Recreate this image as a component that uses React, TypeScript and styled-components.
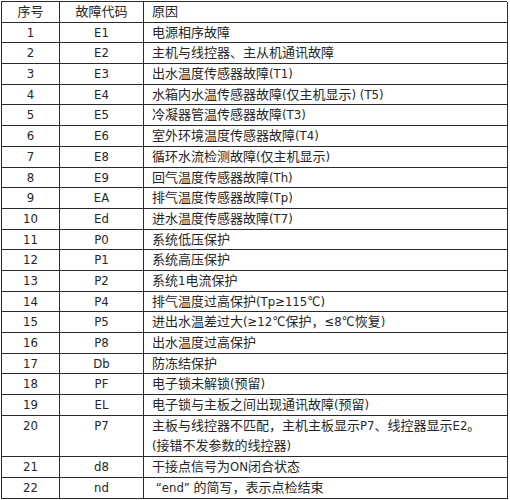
import React from "react";
import styled, { createGlobalStyle } from "styled-components";

const Global = createGlobalStyle`
  html, body { margin: 0; padding: 0; background: #ffffff; }
  body { padding: 1px 0 0 1px; }
`;

const ROW = 20.7;

const Table = styled.div`
  display: grid;
  grid-template-columns: 58px 84px 364px;
  grid-auto-rows: ${ROW}px;
  width: 506px;
  border-top: 1px solid #2a2a2a;
  border-left: 1px solid #2a2a2a;
  box-sizing: border-box;
  font-family: "Liberation Sans Narrow", "DejaVu Sans Condensed", "Noto Sans CJK SC", "Noto Sans", sans-serif;
  font-size: 13px;
  color: #262626;
`;

const Cell = styled.div<{ $align?: "center" | "left"; $span?: number }>`
  border-right: 1px solid #2a2a2a;
  border-bottom: 1px solid #2a2a2a;
  box-sizing: border-box;
  line-height: ${ROW - 1}px;
  padding: 0 ${(p) => (p.$align === "left" ? "8px" : "0")};
  text-align: ${(p) => p.$align ?? "center"};
  white-space: pre;
  overflow: hidden;
  grid-row: span ${(p) => p.$span ?? 1};
`;

const Line = styled.div`
  height: ${ROW}px;
  line-height: ${ROW - 1}px;
`;

type Row = { no: string; code: string; reason: string[] };

const rows: Row[] = [
  { no: "1", code: "E1", reason: ["电源相序故障"] },
  { no: "2", code: "E2", reason: ["主机与线控器、主从机通讯故障"] },
  { no: "3", code: "E3", reason: ["出水温度传感器故障(T1)"] },
  { no: "4", code: "E4", reason: ["水箱内水温传感器故障(仅主机显示) (T5)"] },
  { no: "5", code: "E5", reason: ["冷凝器管温传感器故障(T3)"] },
  { no: "6", code: "E6", reason: ["室外环境温度传感器故障(T4)"] },
  { no: "7", code: "E8", reason: ["循环水流检测故障(仅主机显示)"] },
  { no: "8", code: "E9", reason: ["回气温度传感器故障(Th)"] },
  { no: "9", code: "EA", reason: ["排气温度传感器故障(Tp)"] },
  { no: "10", code: "Ed", reason: ["进水温度传感器故障(T7)"] },
  { no: "11", code: "P0", reason: ["系统低压保护"] },
  { no: "12", code: "P1", reason: ["系统高压保护"] },
  { no: "13", code: "P2", reason: ["系统1电流保护"] },
  { no: "14", code: "P4", reason: ["排气温度过高保护(Tp≥115℃)"] },
  { no: "15", code: "P5", reason: ["进出水温差过大(≥12℃保护，≤8℃恢复)"] },
  { no: "16", code: "P8", reason: ["出水温度过高保护"] },
  { no: "17", code: "Db", reason: ["防冻结保护"] },
  { no: "18", code: "PF", reason: ["电子锁未解锁(预留)"] },
  { no: "19", code: "EL", reason: ["电子锁与主板之间出现通讯故障(预留)"] },
  {
    no: "20",
    code: "P7",
    reason: ["主板与线控器不匹配，主机主板显示P7、线控器显示E2。", "(接错不发参数的线控器)"],
  },
  { no: "21", code: "d8", reason: ["干接点信号为ON闭合状态"] },
  { no: "22", code: "nd", reason: [" “end” 的简写，表示点检结束"] },
];

export default function App() {
  return (
    <>
      <Global />
      <Table>
        <Cell>序号</Cell>
        <Cell>故障代码</Cell>
        <Cell $align="left">原因</Cell>
        {rows.map((r) => {
          const span = r.reason.length;
          return (
            <React.Fragment key={r.no}>
              <Cell $span={span}>{r.no}</Cell>
              <Cell $span={span}>{r.code}</Cell>
              <Cell $align="left" $span={span}>
                {span > 1 ? r.reason.map((t, i) => <Line key={i}>{t}</Line>) : r.reason[0]}
              </Cell>
            </React.Fragment>
          );
        })}
      </Table>
    </>
  );
}
